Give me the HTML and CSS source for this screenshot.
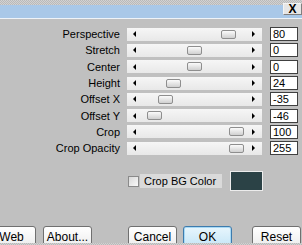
FILE: index.html
```html
<!DOCTYPE html>
<html lang="en">
<head>
  <meta charset="UTF-8">
  <title>Perspective</title>
  <link rel="stylesheet" href="styles.css">
</head>
<body>
  <div class="window">
    <div class="frame-top"></div>
    <div class="titlebar">
      <button class="close-btn">X</button>
    </div>

    <div class="panel">
      <div class="sliders">
        <div class="name">Perspective</div>
        <div class="track"><span class="arrow-left"></span><span class="thumb" style="left: 94px"></span><span class="arrow-right"></span></div>
        <div class="value">80</div>

        <div class="name">Stretch</div>
        <div class="track"><span class="arrow-left"></span><span class="thumb" style="left: 60px"></span><span class="arrow-right"></span></div>
        <div class="value">0</div>

        <div class="name">Center</div>
        <div class="track"><span class="arrow-left"></span><span class="thumb" style="left: 60px"></span><span class="arrow-right"></span></div>
        <div class="value">0</div>

        <div class="name">Height</div>
        <div class="track"><span class="arrow-left"></span><span class="thumb" style="left: 39px"></span><span class="arrow-right"></span></div>
        <div class="value">24</div>

        <div class="name">Offset X</div>
        <div class="track"><span class="arrow-left"></span><span class="thumb" style="left: 31px"></span><span class="arrow-right"></span></div>
        <div class="value">-35</div>

        <div class="name">Offset Y</div>
        <div class="track"><span class="arrow-left"></span><span class="thumb" style="left: 20px"></span><span class="arrow-right"></span></div>
        <div class="value">-46</div>

        <div class="name">Crop</div>
        <div class="track"><span class="arrow-left"></span><span class="thumb" style="left: 102px"></span><span class="arrow-right"></span></div>
        <div class="value">100</div>

        <div class="name">Crop Opacity</div>
        <div class="track"><span class="arrow-left"></span><span class="thumb" style="left: 102px"></span><span class="arrow-right"></span></div>
        <div class="value">255</div>
      </div>

      <div class="bg-row">
        <span class="checkbox"></span>
        <span class="bg-label">Crop BG Color</span>
        <span class="swatch"></span>
      </div>
    </div>

    <div class="buttons">
      <button class="btn btn-web">Web</button>
      <button class="btn btn-about">About...</button>
      <button class="btn btn-cancel">Cancel</button>
      <button class="btn btn-ok">OK</button>
      <button class="btn btn-reset">Reset</button>
    </div>
    <div class="frame-bottom"></div>
  </div>
</body>
</html>
```

FILE: styles.css
```css
body {
  margin: 0;
  padding: 0;
  font-family: "Liberation Sans", Arial, sans-serif;
  font-size: 11px;
  color: #000;
  background-color: #c0c0c0;
}

.window {
  position: relative;
  width: 302px;
  height: 245px;
  overflow: hidden;
  background-color: #c0c0c0;
}

.frame-top,
.frame-bottom {
  background: repeating-conic-gradient(#d2d2d2 0 25%, #b9b9b9 0 50%) 0 0 / 2px 2px;
}

.frame-top {
  height: 5px;
}

.frame-bottom {
  height: 2px;
}

.titlebar {
  height: 13px;
  background-color: #a9c8e8;
  border-bottom: 1px solid #eef3f8;
}

.close-btn {
  position: absolute;
  top: 3px;
  right: 0;
  width: 19px;
  height: 12px;
  padding: 0;
  border: 1px solid #f4f4f4;
  border-right-color: #808080;
  border-bottom-color: #808080;
  background-color: #e6e6e6;
  font-family: "Liberation Sans", Arial, sans-serif;
  font-size: 12px;
  font-weight: bold;
  line-height: 10px;
  color: #000;
}

.panel {
  padding-top: 7px;
}

.sliders {
  display: grid;
  grid-template-columns: 120px 135px 29px;
  grid-auto-rows: 16.3px;
  column-gap: 7px;
  align-items: center;
}

.sliders .value {
  margin-left: 1px;
}

.name {
  text-align: right;
  white-space: nowrap;
}

.track {
  position: relative;
  height: 13px;
  display: flex;
  align-items: center;
  justify-content: space-between;
  padding: 0 7px 0 6px;
  background: linear-gradient(#f6f6f6, #e8e8e8);
}

.arrow-left {
  width: 0;
  height: 0;
  border-top: 3px solid transparent;
  border-bottom: 3px solid transparent;
  border-right: 3px solid #000;
}

.arrow-right {
  width: 0;
  height: 0;
  border-top: 3px solid transparent;
  border-bottom: 3px solid transparent;
  border-left: 3px solid #000;
}

.thumb {
  position: absolute;
  top: 2px;
  width: 13px;
  height: 7px;
  border: 1px solid #8e8e8e;
  border-radius: 2px;
  background: linear-gradient(#fbfbfb, #d0d0d0);
}

.value {
  height: 12px;
  line-height: 12px;
  padding-left: 2px;
  border: 1px solid #404040;
  background-color: #fff;
}

.bg-row {
  display: flex;
  align-items: center;
  height: 20px;
  margin-top: 15px;
  padding-left: 128px;
}

.checkbox {
  width: 9px;
  height: 9px;
  border: 1px solid #8a8a8a;
  background: linear-gradient(135deg, #d8d8d8, #fafafa);
}

.bg-label {
  height: 14px;
  line-height: 14px;
  margin-left: 1px;
  padding: 0 6px 0 4px;
  background-color: #dadada;
}

.swatch {
  width: 31px;
  height: 18px;
  margin-left: 8px;
  border: 1px solid #ececec;
  background-color: #2b4246;
}

.buttons {
  display: flex;
  height: 17px;
  margin-top: 35px;
  overflow: hidden;
}

.btn {
  flex: none;
  width: 49px;
  height: 22px;
  padding: 0;
  border: 1px solid #707070;
  border-radius: 3px;
  background: linear-gradient(#ffffff, #ececec);
  font-family: "Liberation Sans", Arial, sans-serif;
  font-size: 12px;
  color: #000;
}

.btn-web {
  margin-left: -13px;
}

.btn-about {
  margin-left: 7px;
}

.btn-cancel {
  margin-left: 36px;
}

.btn-ok {
  margin-left: 6px;
  border-color: #3d7bad;
  background: linear-gradient(#e8f6fd, #c4e5f6);
  box-shadow: inset 0 0 0 1px #a7d9f5;
}

.btn-reset {
  margin-left: 20px;
}
```
